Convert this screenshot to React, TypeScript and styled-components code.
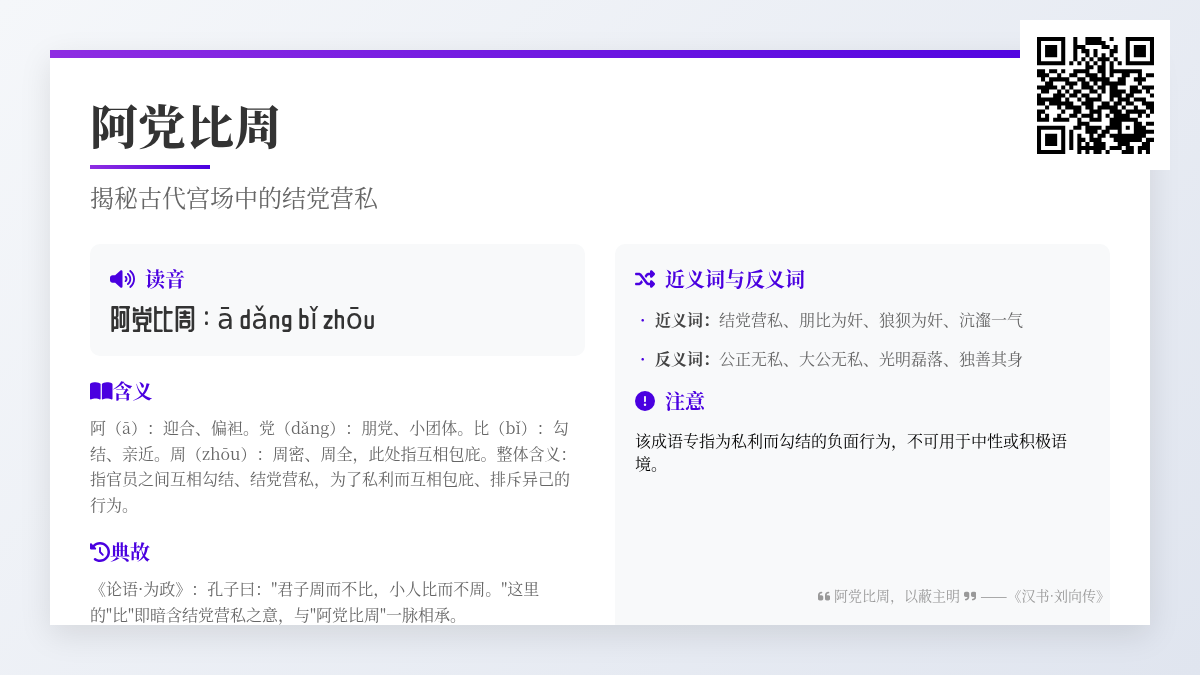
import React from "react";
import styled, { createGlobalStyle } from "styled-components";
import { FaVolumeHigh, FaBookOpen, FaClockRotateLeft, FaShuffle, FaCircleExclamation, FaQuoteLeft, FaQuoteRight } from "react-icons/fa6";

const Global = createGlobalStyle`
  html, body { margin: 0; padding: 0; width: 1200px; height: 675px; overflow: hidden; }
  body { font-family: "Noto Serif CJK SC", "Noto Serif SC", serif; text-spacing-trim: space-all; }
  * { box-sizing: border-box; }
  *::before { box-sizing: border-box; }
`;

const Stage = styled.div`
  position: relative;
  width: 1200px;
  height: 675px;
  padding: 50px;
  background: linear-gradient(135deg, #f5f7fa 0%, #e0e5ef 100%);
`;
const Card = styled.main`
  position: relative;
  width: 1100px;
  height: 575px;
  padding: 46px 40px 0;
  overflow: hidden;
  background: #fff;
  box-shadow: 0 10px 30px rgba(0, 0, 0, 0.1);
  will-change: transform;
`;
const TopBar = styled.div`
  position: absolute;
  top: 0;
  left: 0;
  width: 100%;
  height: 8px;
  background: linear-gradient(90deg, #8e2de2, #4a00e0);
`;
const Title = styled.h1`
  margin: 0;
  font-family: "Noto Serif SC", "Noto Serif CJK SC", serif;
  font-size: 48px;
  line-height: 58px;
  font-weight: 800;
  color: #333;
`;
const Rule = styled.div`
  width: 120px;
  height: 4px;
  margin-top: 11px;
  background: linear-gradient(90deg, #8e2de2, #4a00e0);
`;
const Subtitle = styled.h2`
  margin: 8px 0 0;
  font-size: 24px;
  line-height: 40px;
  font-weight: 400;
  color: #666;
`;
const Columns = styled.div`
  display: grid;
  grid-template-columns: 495px 495px;
  gap: 30px;
  margin-top: 27px;
`;
const Column = styled.section`
  display: flex;
  flex-direction: column;
`;
const Panel = styled.div<{ $tall?: boolean }>`
  padding: 20px;
  border-radius: 10px;
  background: #f8f9fa;
  height: ${(p) => (p.$tall ? "420px" : "112px")};
`;
const Heading = styled.h3<{ $gap?: number; $top?: number }>`
  display: flex;
  align-items: center;
  gap: ${(p) => p.$gap ?? 10}px;
  margin: ${(p) => p.$top ?? 0}px 0 0;
  font-size: 20px;
  line-height: 30px;
  font-weight: 700;
  color: #4a00e0;
  svg { flex: none; }
`;
const VolumeIcon = styled(FaVolumeHigh)`
  width: 25px;
  height: 20px;
`;
const BookIcon = styled(FaBookOpen)`
  width: 22.5px;
  height: 20px;
`;
const Pinyin = styled.div`
  margin-top: 3px;
  font-family: "ZCOOL QingKe HuangYou", "DejaVu Sans", sans-serif;
  font-size: 28px;
  line-height: 42px;
  color: #333;
`;
const Body = styled.p<{ $top?: number }>`
  margin: ${(p) => p.$top ?? 9}px 0 0;
  font-size: 16px;
  line-height: 25.6px;
  color: #666;
`;
const List = styled.ul`
  list-style: none;
  margin: 6px 0 0;
  padding: 0;
`;
const Item = styled.li`
  display: flex;
  height: 39px;
  align-items: center;
  font-size: 16px;
  color: #666;
  &::before {
    content: "·";
    width: 20px;
    padding-left: 5px;
    color: #4a00e0;
    font-weight: 700;
  }
  b { color: #444; font-weight: 700; }
`;
const NoteHeading = styled(Heading)`
  margin-top: 8px;
`;
const Note = styled.p`
  margin: 13px 0 0;
  font-size: 16px;
  line-height: 23px;
  color: #000;
`;
const Quote = styled.div`
  position: absolute;
  right: 40px;
  bottom: 19px;
  display: flex;
  align-items: center;
  gap: 4px;
  font-size: 14px;
  line-height: 21px;
  color: #999;
  white-space: pre;
  svg { width: 12.25px; height: 14px; }
`;
const Dash = styled.span`
  font-size: 16px;
  line-height: 21px;
`;
const Source = styled.span`
  margin-left: -4px;
`;
const QrBox = styled.div`
  position: absolute;
  top: 20px;
  right: 30px;
  width: 150px;
  height: 150px;
  display: flex;
  align-items: center;
  justify-content: center;
  background: #fff;
  svg { display: block; }
`;

const top = [
  "0100111100100", "0100111110000", "0111000011010", "0101101000110",
  "0100101010100", "0101010111010", "1010101010101", "0000110110100",
];
const middle = [
  "11011010011110011011111111000", "11100110110011101010011001011",
  "01011101001101111100110011100", "00110011110110101111110001000",
  "11111010100111011011000110111", "01100111011001101011110111010",
  "10001110110110010011101100001", "11111111001011110010111011100",
  "11011101100111001101101100111", "00100111111011011111010010011",
  "11000010011001110011101111101", "10100100110111010101111001010",
  "11101111001001110011010110000",
];
const bottom = [
  "001110000011011011011", "011011110111110011100", "100011101100110101111",
  "101001011011101011100", "101101110001111111011", "101010111000111000110",
  "101111111011101101110", "001010110100011101010",
];
const QR_SIZE = 29;

function buildMatrix(): boolean[][] {
  const m = Array.from({ length: QR_SIZE }, () => Array<boolean>(QR_SIZE).fill(false));
  top.forEach((row, r) => [...row].forEach((c, i) => { m[r][8 + i] = c === "1"; }));
  middle.forEach((row, r) => [...row].forEach((c, i) => { m[8 + r][i] = c === "1"; }));
  bottom.forEach((row, r) => [...row].forEach((c, i) => { m[21 + r][8 + i] = c === "1"; }));
  const finder = (x: number, y: number) => {
    for (let i = 0; i < 7; i++) for (let j = 0; j < 7; j++) {
      const edge = i === 0 || i === 6 || j === 0 || j === 6;
      const core = i >= 2 && i <= 4 && j >= 2 && j <= 4;
      m[y + i][x + j] = edge || core;
    }
  };
  finder(0, 0); finder(22, 0); finder(0, 22);
  for (let i = 0; i < 5; i++) for (let j = 0; j < 5; j++) {
    const edge = i === 0 || i === 4 || j === 0 || j === 4;
    m[20 + i][20 + j] = edge || (i === 2 && j === 2);
  }
  for (let i = 8; i <= 20; i++) m[i][6] = i % 2 === 0;
  return m;
}

function QrCode() {
  const m = buildMatrix();
  const d = m.flatMap((row, y) => row.map((on, x) => (on ? `M${x} ${y}h1v1h-1z` : ""))).join("");
  return (
    <svg width="117" height="117" viewBox="0 0 29 29" aria-label="QR">
      <path d={d} fill="#000" />
    </svg>
  );
}

export default function App() {
  return (
    <Stage>
      <Global />
      <Card>
        <TopBar />
        <Title>阿党比周</Title>
        <Rule />
        <Subtitle>揭秘古代宫场中的结党营私</Subtitle>
        <Columns>
          <Column>
            <Panel>
              <Heading><VolumeIcon />读音</Heading>
              <Pinyin>阿党比周：ā dǎng bǐ zhōu</Pinyin>
            </Panel>
            <Heading $gap={0} $top={20}><BookIcon />含义</Heading>
            <Body>阿（ā）：迎合、偏袒。党（dǎng）：朋党、小团体。比（bǐ）：勾结、亲近。周（zhōu）：周密、周全，此处指互相包庇。整体含义：指官员之间互相勾结、结党营私，为了私利而互相包庇、排斥异己的行为。</Body>
            <Heading $gap={0} $top={20}><FaClockRotateLeft size={20} />典故</Heading>
            <Body>《论语·为政》：孔子曰："君子周而不比，小人比而不周。"这里的"比"即暗含结党营私之意，与"阿党比周"一脉相承。</Body>
          </Column>
          <Column>
            <Panel $tall>
              <Heading><FaShuffle size={20} />近义词与反义词</Heading>
              <List>
                <Item><b>近义词：</b>结党营私、朋比为奸、狼狈为奸、沆瀣一气</Item>
                <Item><b>反义词：</b>公正无私、大公无私、光明磊落、独善其身</Item>
              </List>
              <NoteHeading><FaCircleExclamation size={20} />注意</NoteHeading>
              <Note>该成语专指为私利而勾结的负面行为，不可用于中性或积极语境。</Note>
            </Panel>
          </Column>
        </Columns>
        <Quote><FaQuoteLeft />阿党比周，以蔽主明<FaQuoteRight /><Dash>——</Dash><Source>《汉书·刘向传》</Source></Quote>
      </Card>
      <QrBox><QrCode /></QrBox>
    </Stage>
  );
}
